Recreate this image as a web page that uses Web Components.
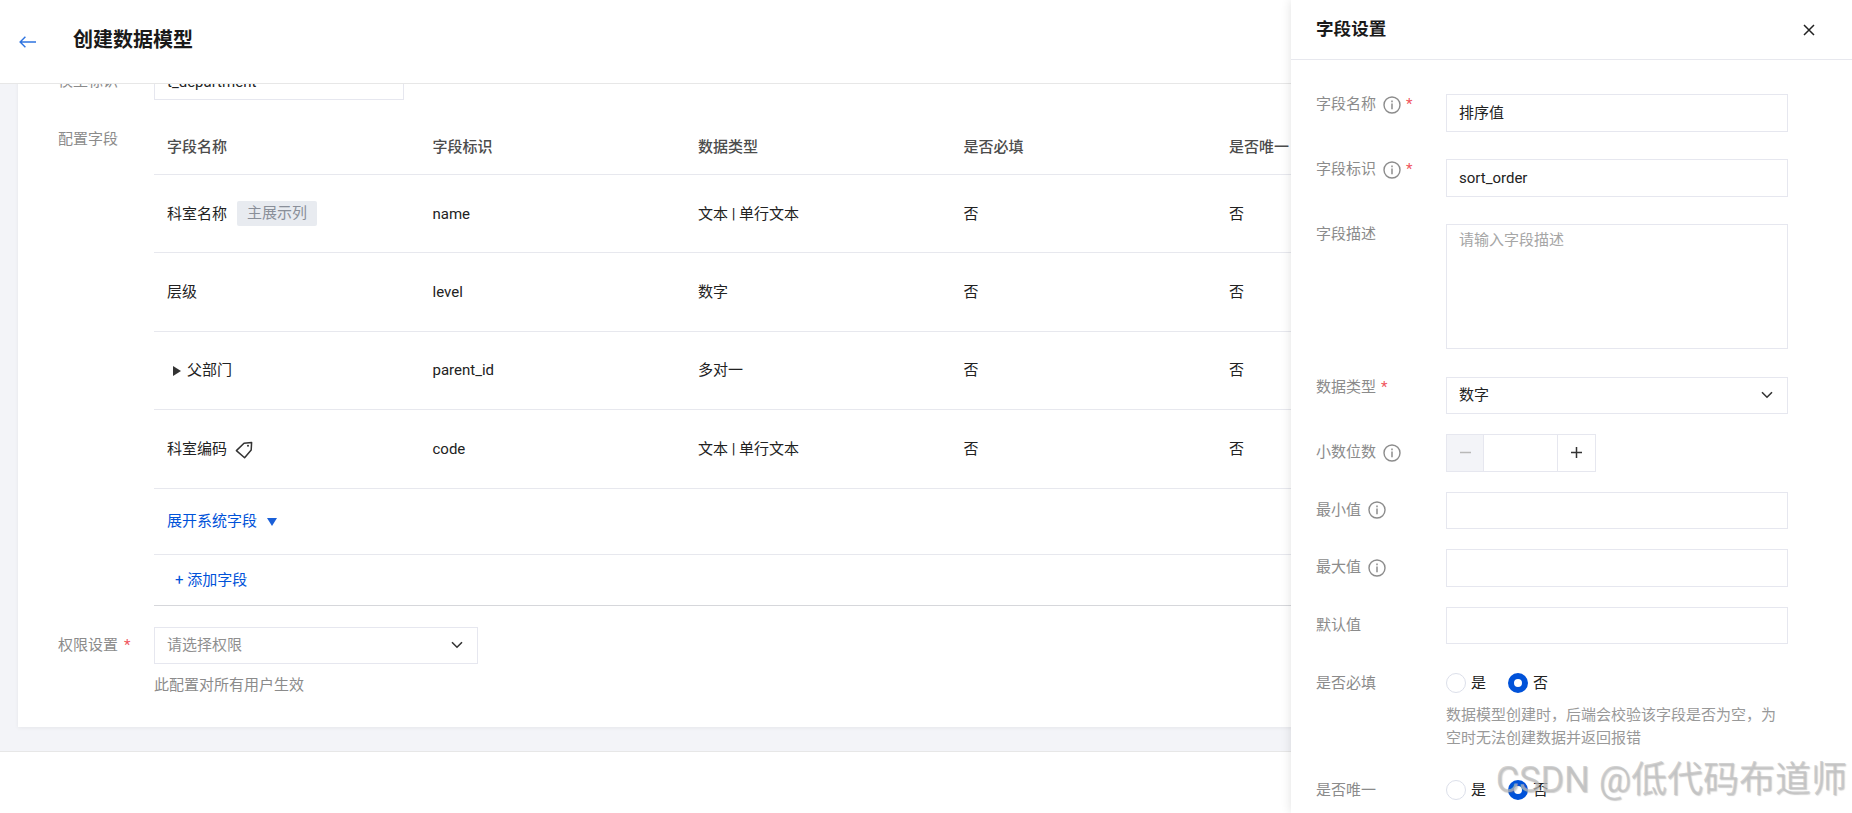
<!DOCTYPE html>
<html lang="zh">
<head>
<meta charset="utf-8">
<title>创建数据模型</title>
<style>
  html, body { margin: 0; height: 100%; overflow: hidden; background: #fff; }
  body { font: 15px/22px Roboto, "Noto Sans CJK SC", sans-serif; color: #222; }
</style>
</head>
<body>
<app-shell>
  <page-header slot="header" heading="创建数据模型"></page-header>
  <model-card>
    <form-row label="模型标识"><text-box style="width:250px;height:37px" value="t_department"></text-box></form-row>
    <form-row label="配置字段" style="margin-top:19px;--label-top:9px">
      <field-table></field-table>
    </form-row>
    <form-row label="权限设置" required style="margin-top:21px;--label-top:7px">
      <select-box style="width:324px" placeholder="请选择权限"></select-box>
      <div style="margin-top:10px;color:#8b8b8b;line-height:22px">此配置对所有用户生效</div>
    </form-row>
  </model-card>
  <field-drawer slot="drawer" heading="字段设置">
    <setting-row label="字段名称" info required><text-box value="排序值"></text-box></setting-row>
    <setting-row label="字段标识" info required style="--top:27.5px"><text-box value="sort_order"></text-box></setting-row>
    <setting-row label="字段描述" style="--top:27.5px"><text-box area style="height:125px" placeholder="请输入字段描述"></text-box></setting-row>
    <setting-row label="数据类型" required style="--top:27.5px"><select-box value="数字"></select-box></setting-row>
    <setting-row label="小数位数" info center style="--top:20px"><num-stepper></num-stepper></setting-row>
    <setting-row label="最小值" info center style="--top:20px"><text-box></text-box></setting-row>
    <setting-row label="最大值" info center style="--top:20px"><text-box></text-box></setting-row>
    <setting-row label="默认值" center style="--top:20px"><text-box></text-box></setting-row>
    <setting-row label="是否必填" style="--top:29px">
      <radio-pair></radio-pair>
      <div style="margin-top:11px;width:342px;color:#999;line-height:23px">数据模型创建时，后端会校验该字段是否为空，为空时无法创建数据并返回报错</div>
    </setting-row>
    <setting-row label="是否唯一" style="--top:30px"><radio-pair></radio-pair></setting-row>
  </field-drawer>
</app-shell>
<water-mark>CSDN @低代码布道师</water-mark>

<script>
// small helper, every element below is just a shadow root with its own style
function shadow(el, html) {
  el.attachShadow({ mode: 'open' });
  el.shadowRoot.innerHTML = html;
}

const chevron = `<svg width="12" height="8" viewBox="0 0 12 8" fill="none"><path d="M1 1.2l5 5 5-5" stroke="#333" stroke-width="1.6"/></svg>`;
const infoIcon = `<svg width="18" height="18" viewBox="0 0 18 18" fill="none"><circle cx="9" cy="9" r="8" stroke="#8c8c8c" stroke-width="1.4"/><path d="M9 7.6v5.6" stroke="#8c8c8c" stroke-width="1.5"/><path d="M9 4.6v1.6" stroke="#8c8c8c" stroke-width="1.5"/></svg>`;
const tagIcon = `<svg width="18" height="18" viewBox="0 0 18 18" fill="none"><path d="M1.4 9.6L9 2.2 16.6 1.4 16.2 9 9.6 16.8z" stroke="#333" stroke-width="1.5" stroke-linejoin="round"/><circle cx="13" cy="4.8" r="1" fill="#333"/></svg>`;

class AppShell extends HTMLElement {
  connectedCallback() {
    shadow(this, `
      <style>
        :host { display: flex; flex-direction: column; height: 813px; position: relative; overflow: hidden; }
        .scroller { height: 667px; flex: none; background: #f3f4f8; border-bottom: 1px solid #e7e7e7; overflow: hidden; }
        .foot { flex: 1; background: #fff; }
      </style>
      <slot name="header"></slot>
      <div class="scroller"><slot></slot></div>
      <div class="foot"></div>
      <slot name="drawer"></slot>`);
  }
}

class PageHeader extends HTMLElement {
  connectedCallback() {
    shadow(this, `
      <style>
        :host { display: flex; align-items: center; flex: none; height: 83px; box-sizing: content-box; background: #fff; border-bottom: 1px solid #e7e7e7; padding-left: 19px; padding-bottom: 0; position: relative; z-index: 1; }
        svg { margin-right: 37px; margin-top: 1px; }
        h1 { margin: 0 0 4px; font-size: 20px; font-weight: 700; line-height: 28px; color: #1a1a1a; }
      </style>
      <svg width="17" height="12" viewBox="0 0 17 12" fill="none"><path d="M17 6H1.2M6.4 .7L1.1 6l5.3 5.3" stroke="#2f74e0" stroke-width="1.4"/></svg>
      <h1>${this.getAttribute('heading')}</h1>`);
  }
}

class ModelCard extends HTMLElement {
  connectedCallback() {
    shadow(this, `
      <style>
        :host { display: block; margin: -21px 18px 0; height: 664px; box-sizing: border-box; background: #fff; box-shadow: 0 1px 4px rgba(0,0,0,.06); }
      </style>
      <slot></slot>`);
  }
}

class FormRow extends HTMLElement {
  connectedCallback() {
    const req = this.hasAttribute('required') ? '<b>*</b>' : '';
    shadow(this, `
      <style>
        :host { display: flex; padding-left: 40px; }
        .label { flex: none; width: 96px; padding-top: var(--label-top, 7px); color: #8b8b8b; }
        b { color: #f0545e; font-weight: 400; margin-left: 6px; }
        .body { flex: 1; min-width: 0; }
      </style>
      <div class="label">${this.getAttribute('label')}${req}</div>
      <div class="body"><slot></slot></div>`);
  }
}

class FieldTable extends HTMLElement {
  connectedCallback() {
    const rows = [
      [`科室名称<span class="pill">主展示列</span>`, 'name', '文本 | 单行文本'],
      ['层级', 'level', '数字'],
      [`<span class="tri"></span>父部门`, 'parent_id', '多对一'],
      [`科室编码<span class="tag">${tagIcon}</span>`, 'code', '文本 | 单行文本'],
    ];
    const rowHtml = rows.map(r => `
      <div class="row">
        <div>${r[0]}</div><div>${r[1]}</div><div>${r[2]}</div><div>否</div><div>否</div>
      </div>`).join('');
    shadow(this, `
      <style>
        :host { display: block; }
        .row { display: grid; grid-template-columns: repeat(5, 265.5px); align-items: center; height: 78.4px; box-sizing: border-box; padding-left: 13px; border-bottom: 1px solid #e7e8ee; }
        .row > div { display: flex; align-items: center; }
        .row.head { height: 56px; color: #4c4c4c; font-weight: 500; }
        .pill { margin-left: 10px; width: 80px; height: 25px; line-height: 25px; text-align: center; border-radius: 2px; background: #e8ebf0; color: #8a8f99; }
        .tri { width: 0; height: 0; margin: 2px 6px 0 6px; border-left: 8px solid #333; border-top: 5.5px solid transparent; border-bottom: 5.5px solid transparent; }
        .tag { display: flex; margin-left: 8px; margin-top: 2px; }
        .link { display: flex; align-items: center; padding-left: 13px; color: #0052d9; border-bottom: 1px solid #e7e8ee; box-sizing: border-box; }
        .expand { height: 66px; }
        .expand i { width: 0; height: 0; margin-left: 10px; margin-top: 2px; border-top: 8px solid #1a5fd8; border-left: 5px solid transparent; border-right: 5px solid transparent; }
        .add { height: 51px; padding-left: 21px; padding-bottom: 0; border-bottom-color: #d6d7db; }
      </style>
      <div class="row head"><div>字段名称</div><div>字段标识</div><div>数据类型</div><div>是否必填</div><div>是否唯一</div></div>
      ${rowHtml}
      <div class="link expand">展开系统字段<i></i></div>
      <div class="link add">+ 添加字段</div>`);
  }
}

class TextBox extends HTMLElement {
  connectedCallback() {
    const value = this.getAttribute('value');
    const ph = this.getAttribute('placeholder');
    shadow(this, `
      <style>
        :host { display: flex; height: 37.5px; box-sizing: border-box; border: 1px solid #e6e7ef; padding: 0 12px; background: #fff; align-items: center; color: #222; }
        :host([area]) { align-items: flex-start; padding-top: 4px; }
        span.ph { color: #a6a6a6; }
      </style>
      ${value ? `<span>${value}</span>` : ph ? `<span class="ph">${ph}</span>` : ''}`);
  }
}

class SelectBox extends HTMLElement {
  connectedCallback() {
    const value = this.getAttribute('value');
    const ph = this.getAttribute('placeholder');
    shadow(this, `
      <style>
        :host { display: flex; height: 37.5px; box-sizing: border-box; border: 1px solid #e6e7ef; padding: 0 14px 0 12px; align-items: center; justify-content: space-between; background: #fff; }
        span.ph { color: #8f8f8f; }
        svg { flex: none; }
      </style>
      <span class="${value ? '' : 'ph'}">${value || ph}</span>${chevron}`);
  }
}

class NumStepper extends HTMLElement {
  connectedCallback() {
    shadow(this, `
      <style>
        :host { display: grid; grid-template-columns: 37px 1fr 38px; width: 150px; height: 37.5px; box-sizing: border-box; border: 1px solid #e6e7ef; background: #fff; }
        div { display: flex; align-items: center; justify-content: center; }
        .minus { background: #f3f4f8; border-right: 1px solid #e6e7ef; }
        .plus { border-left: 1px solid #e6e7ef; }
      </style>
      <div class="minus"><svg width="11" height="11" viewBox="0 0 11 11"><path d="M0 5.5h11" stroke="#b8b8b8" stroke-width="1.5"/></svg></div>
      <div></div>
      <div class="plus"><svg width="11" height="11" viewBox="0 0 11 11"><path d="M0 5.5h11M5.5 0v11" stroke="#333" stroke-width="1.5"/></svg></div>`);
  }
}

class RadioPair extends HTMLElement {
  connectedCallback() {
    shadow(this, `
      <style>
        :host { display: flex; align-items: center; height: 20px; color: #222; }
        i { width: 20px; height: 20px; box-sizing: border-box; border-radius: 50%; border: 1px solid #dcdfea; margin-right: 5px; background: #fff; }
        i.on { border: 6px solid #0052d9; }
        span { width: 37px; }
      </style>
      <i></i><span>是</span><i class="on"></i><span>否</span>`);
  }
}

class FieldDrawer extends HTMLElement {
  connectedCallback() {
    shadow(this, `
      <style>
        :host { position: absolute; top: 0; right: 0; bottom: 0; width: 561px; z-index: 2; background: #fff; box-shadow: 0 0 10px rgba(0,0,0,.12); display: flex; flex-direction: column; }
        header { flex: none; height: 60px; box-sizing: border-box; border-bottom: 1px solid #e7e8ee; display: flex; align-items: center; justify-content: space-between; padding: 0 37px 0 25px; }
        h2 { margin: 0 0 2px; font-size: 17.6px; font-weight: 700; color: #1a1a1a; }
        .body { padding: 34px 0 0 25px; }
      </style>
      <header><h2>${this.getAttribute('heading')}</h2>
        <svg width="12" height="12" viewBox="0 0 12 12" fill="none"><path d="M1 1l10 10M11 1L1 11" stroke="#222" stroke-width="1.5"/></svg>
      </header>
      <div class="body"><slot></slot></div>`);
  }
}

class SettingRow extends HTMLElement {
  connectedCallback() {
    const info = this.hasAttribute('info') ? `<span class="i">${infoIcon}</span>` : '';
    const req = this.hasAttribute('required') ? '<b>*</b>' : '';
    shadow(this, `
      <style>
        :host { display: flex; margin-top: var(--top, 0); }
        :host([center]) { align-items: center; }
        .label { flex: none; width: 130px; display: flex; align-items: center; color: #8b8b8b; line-height: 21px; height: 21px; }
        .i { display: flex; margin-left: 7px; }
        b { color: #f0545e; font-weight: 400; margin-left: 5px; }
        .body { width: 342px; }
      </style>
      <div class="label">${this.getAttribute('label')}${info}${req}</div>
      <div class="body"><slot></slot></div>`);
  }
}

class WaterMark extends HTMLElement {
  connectedCallback() {
    shadow(this, `
      <style>
        :host { position: absolute; z-index: 3; right: 5px; top: 758px; font-size: 36px; line-height: 44px; color: rgba(190,190,190,.7); text-shadow: 1px 1px 1px rgba(120,120,120,.35); white-space: nowrap; }
      </style>
      <slot></slot>`);
  }
}

customElements.define('app-shell', AppShell);
customElements.define('page-header', PageHeader);
customElements.define('model-card', ModelCard);
customElements.define('form-row', FormRow);
customElements.define('field-table', FieldTable);
customElements.define('text-box', TextBox);
customElements.define('select-box', SelectBox);
customElements.define('num-stepper', NumStepper);
customElements.define('radio-pair', RadioPair);
customElements.define('field-drawer', FieldDrawer);
customElements.define('setting-row', SettingRow);
customElements.define('water-mark', WaterMark);
</script>
</body>
</html>
